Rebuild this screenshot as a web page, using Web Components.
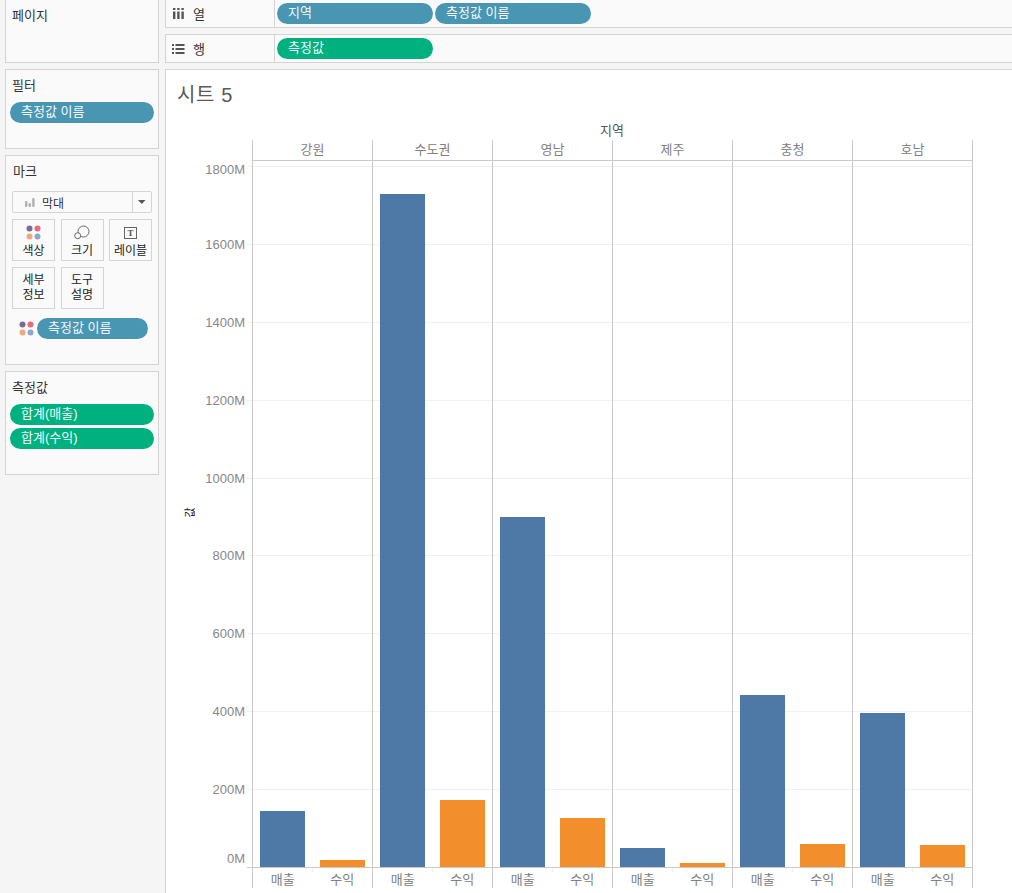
<!DOCTYPE html>
<html lang="ko">
<head>
<meta charset="utf-8">
<title>시트 5</title>
<style>
  html, body { margin: 0; height: 100%; overflow: hidden; }
  body {
    background: #f5f5f5;
    color: #333;
    font: 13px "Liberation Sans", "Noto Sans CJK KR", sans-serif;
  }
  .workspace {
    display: grid;
    grid-template-columns: 154px 1fr;
    column-gap: 6px;
    padding-left: 5px;
    width: 1007px;
    height: 893px;
    overflow: hidden;
  }
  .side, .main { display: flex; flex-direction: column; gap: 6px; min-width: 0; }
</style>
</head>
<body>
<div class="workspace">
  <div class="side">
    <side-card label="페이지" style="height: 64px; margin-top: -1px"></side-card>
    <side-card label="필터" style="height: 80px">
      <data-pill tone="blue">측정값 이름</data-pill>
    </side-card>
    <marks-card style="height: 210px"></marks-card>
    <side-card label="측정값" style="height: 104px">
      <data-pill tone="green">합계(매출)</data-pill>
      <data-pill tone="green" style="margin-top: 3px">합계(수익)</data-pill>
    </side-card>
  </div>
  <div class="main">
    <tab-shelf label="열" icon="cols" style="margin-top: -1px">
      <data-pill tone="blue" style="width: 156px">지역</data-pill>
      <data-pill tone="blue" style="width: 156px">측정값 이름</data-pill>
    </tab-shelf>
    <tab-shelf label="행" icon="rows">
      <data-pill tone="green" style="width: 156px">측정값</data-pill>
    </tab-shelf>
    <sheet-view></sheet-view>
  </div>
</div>

<script>
class DataPill extends HTMLElement {
  constructor() {
    super();
    this.attachShadow({ mode: "open" });
    this.shadowRoot.innerHTML = `
    <style>
      :host {
        display: block;
        box-sizing: border-box;
        height: 21px;
        line-height: 19px;
        padding-left: 11px;
        border-radius: 11px;
        background: #4996b2;
        color: #f4f8fa;
        font-size: 13px;
        white-space: nowrap;
      }
      :host([tone="green"]) { background: #00b180; }
    </style>
    <slot></slot>`;
  }
}
customElements.define("data-pill", DataPill);

class SideCard extends HTMLElement {
  constructor() {
    super();
    this.attachShadow({ mode: "open" });
    this.shadowRoot.innerHTML = `
    <style>
      :host {
        display: block;
        box-sizing: border-box;
        background: #fafafa;
        border: 1px solid #d4d4d4;
        padding: 8px 4px 0 4px;
      }
      .label { color: #333; height: 15px; line-height: 15px; padding-left: 2px; margin-bottom: 9px; }
    </style>
    <div class="label">${this.getAttribute("label") ?? ""}</div>
    <slot></slot>`;
  }
}
customElements.define("side-card", SideCard);

const dots = `
  <svg width="15" height="15" viewBox="0 0 15 15" style="display: block">
    <circle cx="3.5" cy="3.5" r="3" fill="#7a6a96"/>
    <circle cx="11.5" cy="3.5" r="3" fill="#e96a7b"/>
    <circle cx="3.5" cy="11.5" r="3" fill="#f2a77c"/>
    <circle cx="11.5" cy="11.5" r="3" fill="#8aa8cf"/>
  </svg>`;

class MarkButton extends HTMLElement {
  constructor() {
    super();
    this.attachShadow({ mode: "open" });
    this.shadowRoot.innerHTML = `
    <style>
      :host {
        display: flex;
        flex-direction: column;
        align-items: center;
        justify-content: center;
        box-sizing: border-box;
        height: 42px;
        border: 1px solid #d4d4d4;
        background: #fafafa;
        color: #222;
        font-size: 12px;
        line-height: 15px;
        text-align: center;
      }
      ::slotted([slot="icon"]) { display: block; margin: 3px 0 4px; }
    </style>
    <slot name="icon"></slot>
    <slot></slot>`;
  }
}
customElements.define("mark-button", MarkButton);

class MarksCard extends HTMLElement {
  constructor() {
    super();
    this.attachShadow({ mode: "open" });
    this.shadowRoot.innerHTML = `
    <style>
      :host {
        display: block;
        box-sizing: border-box;
        background: #fafafa;
        border: 1px solid #d4d4d4;
        padding: 8px 6px 0 6px;
      }
      .label { height: 15px; line-height: 15px; margin-bottom: 12px; padding-left: 1px; }
      .select {
        display: flex;
        box-sizing: border-box;
        height: 22px;
        width: 140px;
        border: 1px solid #d4d4d4;
        border-radius: 2px;
        background: #fafafa;
        align-items: center;
        font-size: 12px;
        color: #333;
      }
      .select .name { flex: 1; display: flex; align-items: center; gap: 7px; padding-left: 12px; }
      .select .caret { width: 18px; height: 20px; border-left: 1px solid #d4d4d4; display: grid; place-items: center; }
      .grid {
        display: grid;
        grid-template-columns: repeat(3, 43px);
        column-gap: 5.5px;
        row-gap: 6px;
        margin-top: 6px;
      }
      .assigned { display: flex; align-items: center; gap: 3px; margin-top: 9px; padding-left: 7px; }
      .assigned data-pill { width: 111px; }
    </style>
    <div class="label">마크</div>
    <div class="select">
      <span class="name">
        <svg width="10" height="10" viewBox="0 0 10 10">
          <rect x="0" y="4" width="2.4" height="6" rx="1" fill="#b0b0b0"/>
          <rect x="3.6" y="6" width="2.4" height="4" rx="1" fill="#b0b0b0"/>
          <rect x="7.2" y="1" width="2.4" height="9" rx="1" fill="#b0b0b0"/>
        </svg>
        막대
      </span>
      <span class="caret"><svg width="8" height="4" viewBox="0 0 8 4"><path d="M0 0h7.5L3.75 4z" fill="#555"/></svg></span>
    </div>
    <div class="grid">
      <mark-button><span slot="icon">${dots}</span>색상</mark-button>
      <mark-button>
        <svg slot="icon" width="16" height="15" viewBox="0 0 16 15" fill="#fafafa" stroke="#666" stroke-width="1">
          <circle cx="9.5" cy="6.5" r="5.5"/>
          <circle cx="3.7" cy="10.7" r="3"/>
        </svg>
        크기
      </mark-button>
      <mark-button>
        <svg slot="icon" width="14" height="15" viewBox="0 0 14 15">
          <rect x="0.5" y="2.5" width="12" height="11" fill="none" stroke="#666"/>
          <text x="6.5" y="11" text-anchor="middle" font-family="Liberation Serif" font-size="9" font-weight="700" fill="#555">T</text>
        </svg>
        레이블
      </mark-button>
      <mark-button>세부<br>정보</mark-button>
      <mark-button>도구<br>설명</mark-button>
    </div>
    <div class="assigned">${dots}<data-pill tone="blue">측정값 이름</data-pill></div>`;
  }
}
customElements.define("marks-card", MarksCard);

class TabShelf extends HTMLElement {
  constructor() {
    super();
    this.attachShadow({ mode: "open" });
    const icon = this.getAttribute("icon") === "cols"
      ? `<svg width="13" height="11" viewBox="0 0 13 11" fill="#555">
           <rect x="1" y="0" width="2.4" height="2"/><rect x="1" y="3.5" width="2.4" height="7.5"/>
           <rect x="5.2" y="0" width="2.4" height="2"/><rect x="5.2" y="3.5" width="2.4" height="7.5"/>
           <rect x="9.4" y="0" width="2.4" height="2"/><rect x="9.4" y="3.5" width="2.4" height="7.5"/>
         </svg>`
      : `<svg width="13" height="10" viewBox="0 0 13 10" fill="#555">
           <rect x="0" y="0" width="2" height="2"/><rect x="3.5" y="0" width="9" height="2"/>
           <rect x="0" y="4" width="2" height="2"/><rect x="3.5" y="4" width="9" height="2"/>
           <rect x="0" y="8" width="2" height="2"/><rect x="3.5" y="8" width="9" height="2"/>
         </svg>`;
    this.shadowRoot.innerHTML = `
    <style>
      :host {
        display: flex;
        box-sizing: border-box;
        height: 29px;
        background: #fafafa;
        border: 1px solid #d4d4d4;
        border-right: 0;
      }
      .head {
        box-sizing: border-box;
        width: 109px;
        border-right: 1px solid #d4d4d4;
        display: flex;
        align-items: center;
        gap: 8px;
        padding-left: 6px;
      }
      .pills { display: flex; align-items: center; gap: 2px; padding-left: 2px; }
    </style>
    <div class="head">${icon}<span>${this.getAttribute("label")}</span></div>
    <div class="pills"><slot></slot></div>`;
  }
}
customElements.define("tab-shelf", TabShelf);

class BarPane extends HTMLElement {
  constructor() {
    super();
    this.attachShadow({ mode: "open" });
    const sales = this.getAttribute("sales");
    const profit = this.getAttribute("profit");
    this.shadowRoot.innerHTML = `
    <style>
      :host {
        display: flex;
        align-items: flex-end;
        gap: 15px;
        box-sizing: border-box;
        padding-left: 7px;
        border-left: 1px solid #c9c9c9;
        height: 100%;
      }
      div { width: 45px; }
      .sales { background: #4e79a7; height: ${sales}px; }
      .profit { background: #f28e2b; height: ${profit}px; }
    </style>
    <div class="sales"></div>
    <div class="profit"></div>`;
  }
}
customElements.define("bar-pane", BarPane);

class SheetView extends HTMLElement {
  constructor() {
    super();
    this.attachShadow({ mode: "open" });
    const regions = [
      ["강원", 56, 7],
      ["수도권", 673, 67],
      ["영남", 350, 49],
      ["제주", 19, 4],
      ["충청", 172, 23],
      ["호남", 154, 22],
    ];
    // label centre and gridline y differ at the two ends of the axis
    const ticks = [
      ["1800M", 166, 170], ["1600M", 244, 245], ["1400M", 322, 323], ["1200M", 400, 401], ["1000M", 478, 479],
      ["800M", 555, 556], ["600M", 633, 634], ["400M", 711, 712], ["200M", 789, 790], ["0M", 867, 859],
    ];
    const top = 161;
    this.shadowRoot.innerHTML = `
    <style>
      :host {
        display: block;
        flex: 1;
        box-sizing: border-box;
        background: #fff;
        border: 1px solid #d4d4d4;
        border-right: 0;
        border-bottom: 0;
        color: #666;
        min-height: 0;
      }
      .title { font-size: 20px; color: #5a5a5a; padding: 13px 0 0 11px; height: 42px; line-height: 25px; letter-spacing: 0.6px; }
      .chart {
        display: grid;
        grid-template-columns: 86px 720px 1px;
        grid-template-rows: 15px 21px 707px 20px;
      }
      .field { grid-column: 2; text-align: center; line-height: 11px; color: #555; }
      .heads, .foot { grid-column: 2; display: grid; grid-template-columns: repeat(6, 120px); }
      .heads { border-bottom: 1px solid #c9c9c9; box-sizing: border-box; }
      .heads span {
        border-left: 1px solid #c9c9c9;
        text-align: center;
        line-height: 20px;
        color: #808080;
      }
      .axis { grid-column: 1; position: relative; }
      .axis .tick {
        position: absolute;
        right: 7px;
        line-height: 14px;
        color: #888;
        transform: translateY(-7px);
      }
      .axis .title-y {
        position: absolute;
        left: 19px;
        top: 345px;
        font-size: 11px;
        line-height: 13px;
        color: #222;
        transform: rotate(-90deg);
      }
      .plot {
        grid-column: 2;
        position: relative;
        display: grid;
        grid-template-columns: repeat(6, 120px);
        box-sizing: border-box;
        height: 706px;
      }
      .grid-line { position: absolute; left: -5px; right: 0; height: 1px; background: #f0f0f0; }
      .base-line { position: absolute; left: -5px; right: 0; bottom: -1px; height: 1px; background: #c9c9c9; }
      bar-pane { position: relative; }
      .edge { grid-column: 3; grid-row: 2 / 5; background: #c9c9c9; }
      .foot { grid-row: 4; grid-template-rows: 20px; }
      .foot .pane { display: grid; grid-template-columns: 1fr 1fr; grid-template-rows: 20px; border-left: 1px solid #c9c9c9; position: relative; }
      .foot .pane::after { content: ""; position: absolute; left: 59px; top: 0; width: 1px; height: 4px; background: #eee; }
      .foot span { text-align: center; height: 20px; line-height: 24px; color: #808080; }
    </style>
    <div class="title">시트 5</div>
    <div class="chart">
      <div class="field">지역</div>
      <div class="heads" style="grid-row: 2">${regions.map(r => `<span>${r[0]}</span>`).join("")}</div>
      <div class="axis" style="grid-row: 3">
        <div class="title-y">값</div>
        ${ticks.map(t => `<div class="tick" style="top: ${t[2] - top}px">${t[0]}</div>`).join("")}
      </div>
      <div class="plot" style="grid-row: 3">
        ${ticks.slice(0, -1).map(t => `<div class="grid-line" style="top: ${t[1] - top}px"></div>`).join("")}
        ${regions.map(r => `<bar-pane sales="${r[1]}" profit="${r[2]}"></bar-pane>`).join("")}
        <div class="base-line"></div>
      </div>
      <div class="edge"></div>
      <div class="foot">${regions.map(() => `<div class="pane"><span>매출</span><span>수익</span></div>`).join("")}</div>
    </div>`;
  }
}
customElements.define("sheet-view", SheetView);
</script>
</body>
</html>
